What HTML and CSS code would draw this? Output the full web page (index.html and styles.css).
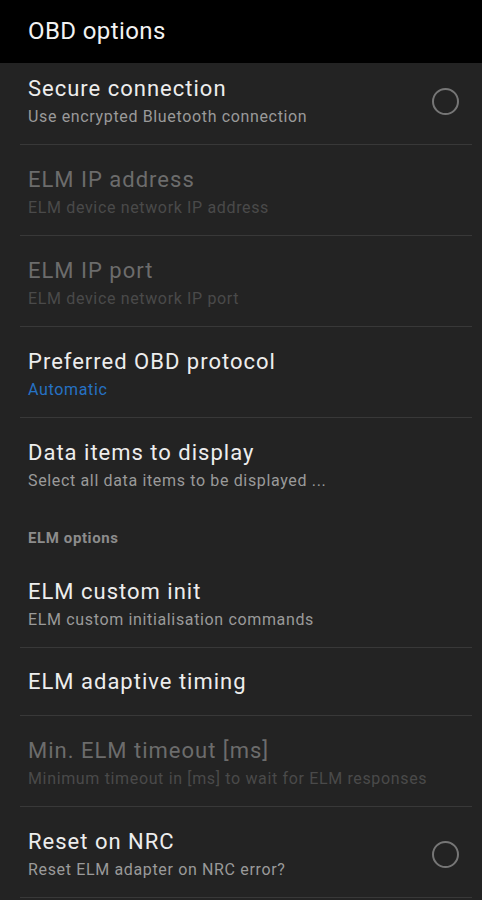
FILE: index.html
```html
<!DOCTYPE html>
<html>
<head>
	<title>OBD options</title>
	<meta charset="utf-8">
	<link rel="stylesheet" href="styles.css">
</head>
<body>
	<div class="screen">
		<div class="toolbar">OBD options</div>

		<div class="list">
		<div class="list-inner">
			<div class="pref">
				<div class="pref-text">
					<div class="pref-title">Secure connection</div>
					<div class="pref-sum">Use encrypted Bluetooth connection</div>
				</div>
				<div class="radio"></div>
			</div>

			<div class="pref off">
				<div class="pref-text">
					<div class="pref-title">ELM IP address</div>
					<div class="pref-sum">ELM device network IP address</div>
				</div>
			</div>

			<div class="pref off">
				<div class="pref-text">
					<div class="pref-title">ELM IP port</div>
					<div class="pref-sum">ELM device network IP port</div>
				</div>
			</div>

			<div class="pref">
				<div class="pref-text">
					<div class="pref-title">Preferred OBD protocol</div>
					<div class="pref-sum value">Automatic</div>
				</div>
			</div>

			<div class="pref last">
				<div class="pref-text">
					<div class="pref-title">Data items to display</div>
					<div class="pref-sum">Select all data items to be displayed ...</div>
				</div>
			</div>

			<div class="category">ELM options</div>

			<div class="pref">
				<div class="pref-text">
					<div class="pref-title">ELM custom init</div>
					<div class="pref-sum">ELM custom initialisation commands</div>
				</div>
			</div>

			<div class="pref single">
				<div class="pref-text">
					<div class="pref-title">ELM adaptive timing</div>
				</div>
			</div>

			<div class="pref off">
				<div class="pref-text">
					<div class="pref-title">Min. ELM timeout [ms]</div>
					<div class="pref-sum">Minimum timeout in [ms] to wait for ELM responses</div>
				</div>
			</div>

			<div class="pref">
				<div class="pref-text">
					<div class="pref-title">Reset on NRC</div>
					<div class="pref-sum">Reset ELM adapter on NRC error?</div>
				</div>
				<div class="radio"></div>
			</div>
		</div>
		</div>
	</div>
</body>
</html>
```

FILE: styles.css
```css
body{
	margin: 0;
	padding: 0;
	background: #232323;
	font-family: Roboto, "Noto Sans", sans-serif;
}
.screen{
	display: flex;
	flex-direction: column;
	height: 900px;
	overflow: hidden;
}
.toolbar{
	background: #000;
	color: #f2f2f2;
	font-size: 24px;
	letter-spacing: 0.4px;
	height: 63px;
	line-height: 63px;
	padding-left: 28px;
	flex-shrink: 0;
}
.list{
	flex: 1;
	overflow: hidden;
}
/* list is scrolled a little */
.list-inner{
	margin-top: -9px;
}
.pref{
	display: flex;
	align-items: center;
	margin-left: 20px;
	margin-right: 10px;
	padding: 21px 14px 16px 8px;
	border-bottom: 1px solid #383838;
}
.pref.single{
	padding-top: 20px;
	padding-bottom: 19px;
}
.pref.last{
	border-bottom: none;
}
.pref-text{
	flex: 1;
	white-space: nowrap;
}
.pref-title{
	color: #ededed;
	font-size: 22px;
	letter-spacing: 1px;
	line-height: 28px;
}
.pref-sum{
	color: #9a9a9a;
	font-size: 16px;
	letter-spacing: 0.65px;
	line-height: 22px;
	margin-top: 3px;
}
.pref-sum.value{
	color: #2672c4;
}
.off .pref-title{
	color: #6c6c6c;
}
.off .pref-sum{
	color: #4a4a4a;
}
.radio{
	width: 23px;
	height: 23px;
	border: 2px solid #767676;
	border-radius: 50%;
	margin-right: -1px;
}
.category{
	color: #8c8c8c;
	font-size: 15px;
	font-weight: bold;
	letter-spacing: 0.6px;
	line-height: 20px;
	padding: 20px 0 9px 28px;
}
```
